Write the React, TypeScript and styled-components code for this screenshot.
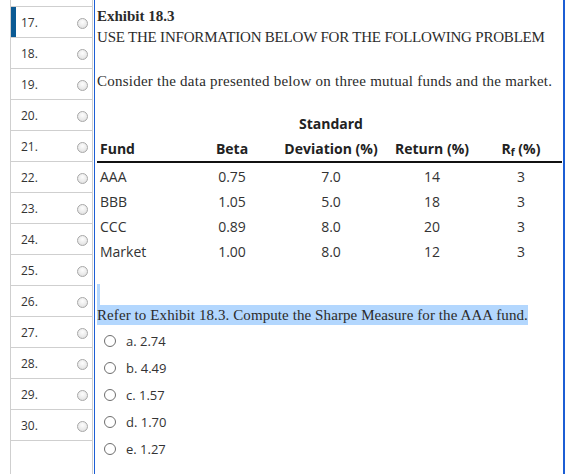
import styled, { createGlobalStyle } from 'styled-components';
import { FC } from 'react';

const GlobalStyle = createGlobalStyle`
    body {
        margin: 0;
        background: #fff;
    }
`;

const questionNumbers = [17, 18, 19, 20, 21, 22, 23, 24, 25, 26, 27, 28, 29, 30];

const funds = [
    { name: 'AAA', beta: '0.75', sd: '7.0', ret: '14', rf: '3' },
    { name: 'BBB', beta: '1.05', sd: '5.0', ret: '18', rf: '3' },
    { name: 'CCC', beta: '0.89', sd: '8.0', ret: '20', rf: '3' },
    { name: 'Market', beta: '1.00', sd: '8.0', ret: '12', rf: '3' },
];

const answers = ['a. 2.74', 'b. 4.49', 'c. 1.57', 'd. 1.70', 'e. 1.27'];

const App: FC = () => (
    <>
        <GlobalStyle />
        <Page>
            <Sidebar>
                <TopStub />
                {questionNumbers.map((n) => (
                    <NavRow key={n} $active={n === 17}>
                        <NavNumber>{n}.</NavNumber>
                        <NavDot />
                    </NavRow>
                ))}
            </Sidebar>
            <Panel>
                <ExhibitTitle>Exhibit 18.3</ExhibitTitle>
                <Paragraph $spacing={-0.2}>USE THE INFORMATION BELOW FOR THE FOLLOWING PROBLEM</Paragraph>
                <Intro>Consider the data presented below on three mutual funds and the market.</Intro>
                <Table>
                    <HeadCell $align='left'>Fund</HeadCell>
                    <HeadCell>Beta</HeadCell>
                    <HeadCell>
                        <span>Standard</span>
                        <span>Deviation (%)</span>
                    </HeadCell>
                    <HeadCell>Return (%)</HeadCell>
                    <HeadCell $shift>
                        <span>
                            R<Sub>f</Sub> (%)
                        </span>
                    </HeadCell>
                    {funds.map((f) => (
                        <Row key={f.name}>
                            <Cell $align='left'>{f.name}</Cell>
                            <Cell>{f.beta}</Cell>
                            <Cell>{f.sd}</Cell>
                            <Cell>{f.ret}</Cell>
                            <Cell $shift>{f.rf}</Cell>
                        </Row>
                    ))}
                </Table>
                <EmptyLine>
                    <Selected $blank />
                </EmptyLine>
                <Question>
                    <Selected>Refer to Exhibit 18.3. Compute the Sharpe Measure for the AAA fund.</Selected>
                </Question>
                <Options>
                    {answers.map((a) => (
                        <Option key={a}>
                            <Radio />
                            {a}
                        </Option>
                    ))}
                </Options>
            </Panel>
        </Page>
    </>
);

const Page = styled.div({
    display: 'flex',
    height: '474px',
    overflow: 'hidden',
});

const Sidebar = styled.div({
    marginLeft: '10px',
    width: '81px',
    borderLeft: '1px solid #cfcfcf',
    borderRight: '1px solid #cfcfcf',
    flexShrink: 0,
});

const TopStub = styled.div({
    height: '6px',
    borderBottom: '1px solid #cfcfcf',
});

const NavRow = styled.div<{ $active?: boolean }>(({ $active }) => ({
    height: '30px',
    borderBottom: '1px solid #cfcfcf',
    display: 'flex',
    alignItems: 'center',
    justifyContent: 'space-between',
    padding: '0 4px 0 10px',
    boxShadow: $active ? 'inset 5px 0 0 #0b5a94' : 'none',
}));

const NavNumber = styled.span({
    fontFamily: '"Open Sans", sans-serif',
    fontSize: '12px',
    color: '#333',
    marginTop: '1px',
});

const NavDot = styled.span({
    width: '9px',
    height: '9px',
    borderRadius: '50%',
    border: '1px solid #a8a8a8',
    background: 'radial-gradient(circle at 50% 35%, #fdfdfd 0%, #e9e9e9 60%, #d6d6d6 100%)',
    marginTop: '2px',
});

const Panel = styled.div({
    marginLeft: '1px',
    flex: 1,
    minWidth: 0,
    borderLeft: '1px solid #1c5ed4',
    borderRight: '2px solid #1c5ed4',
    padding: '6px 0 0 2px',
    fontFamily: '"Liberation Serif", serif',
    fontSize: '15px',
    color: '#2b2b2b',
    whiteSpace: 'nowrap',
});

const ExhibitTitle = styled.div({
    fontWeight: 700,
    lineHeight: '21px',
});

const Paragraph = styled.div<{ $spacing?: number }>(({ $spacing = 0 }) => ({
    lineHeight: '21px',
    letterSpacing: `${$spacing}px`,
}));

const Intro = styled.div({
    lineHeight: '21px',
    marginTop: '23px',
    letterSpacing: '0.24px',
});

const Table = styled.div({
    display: 'grid',
    gridTemplateColumns: '104px 62px 136px 66px 97px',
    marginTop: '19px',
    fontFamily: '"Open Sans", sans-serif',
    fontSize: '14px',
    color: '#333',
});

const HeadCell = styled.div<{ $align?: 'left'; $shift?: boolean }>(({ $align, $shift }) => ({
    display: 'flex',
    flexDirection: 'column',
    justifyContent: 'flex-end',
    alignItems: $align === 'left' ? 'flex-start' : 'center',
    height: '50px',
    lineHeight: '25px',
    fontWeight: 700,
    color: '#222',
    padding: $align === 'left' ? '0 0 0 3px' : $shift ? '0 0 0 15px' : 0,
    borderBottom: '2px solid #111',
    marginBottom: '1px',
}));

const Sub = styled.span({
    fontSize: '10px',
    lineHeight: 0,
    verticalAlign: '-2px',
});

const Row = styled.div({
    display: 'contents',
});

const Cell = styled.div<{ $align?: 'left'; $shift?: boolean }>(({ $align, $shift }) => ({
    lineHeight: '25px',
    textAlign: $align === 'left' ? 'left' : 'center',
    padding: $align === 'left' ? '0 0 0 3px' : $shift ? '0 0 0 15px' : 0,
}));

const EmptyLine = styled.div({
    marginTop: '20px',
    height: '21px',
});

const Selected = styled.span<{ $blank?: boolean }>(({ $blank }) => ({
    display: 'inline-block',
    background: '#b3d7fe',
    lineHeight: $blank ? '21px' : '20px',
    height: $blank ? '21px' : '20px',
    width: $blank ? '3px' : 'auto',
    verticalAlign: 'top',
    letterSpacing: $blank ? 0 : '0.09px',
}));

const Question = styled.div({
    height: '20px',
    lineHeight: '20px',
});

const Options = styled.div({
    marginTop: '2px',
});

const Option = styled.label({
    display: 'flex',
    alignItems: 'center',
    height: '27px',
    paddingLeft: '7px',
    gap: '10px',
    fontFamily: '"Open Sans", sans-serif',
    fontSize: '13px',
    color: '#333',
});

const Radio = styled.span({
    width: '10px',
    height: '10px',
    borderRadius: '50%',
    border: '1.5px solid #6e6e6e',
    background: '#fff',
});

export default App;
